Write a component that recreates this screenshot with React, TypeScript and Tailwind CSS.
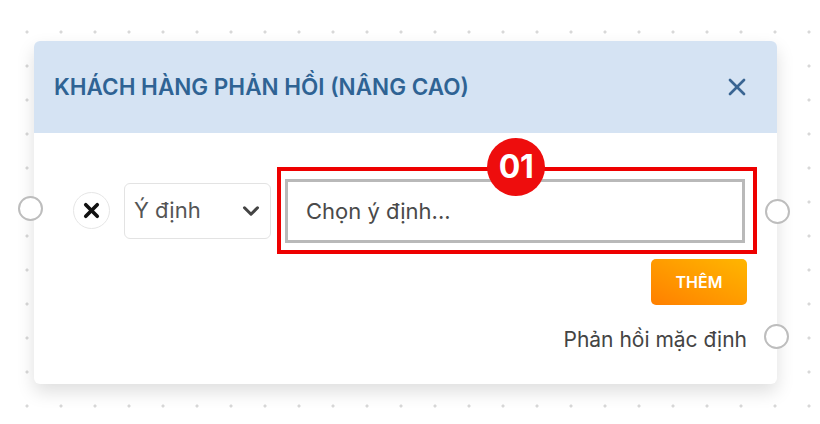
import { X, ChevronDown } from "lucide-react";

const FONT = { fontFamily: "Inter, 'Noto Sans', sans-serif" };

function Handle({ className }: { className: string }) {
  return (
    <div
      className={`absolute w-[25px] h-[25px] rounded-full border-2 border-[#bdbdbd] bg-white ${className}`}
    />
  );
}

export default function App() {
  return (
    <div
      style={FONT}
      className="relative w-[820px] h-[424px] bg-white bg-[radial-gradient(circle,#d8d8d8_1.3px,transparent_1.8px)] bg-[size:34px_34px] bg-[position:10px_15px] pt-[41px] pl-[34px]"
    >
      {/* node card */}
      <div className="relative w-[743px] h-[343px] rounded-[6px] bg-white shadow-[0_8px_18px_rgba(0,0,0,0.13)]">
        <div className="flex items-center justify-between h-[92px] rounded-t-[6px] bg-[#d5e3f3] pl-[20px] pr-[26px]">
          <span className="text-[22.5px] font-semibold text-[#2f6394] tracking-[0px]">
            KHÁCH HÀNG PHẢN HỒI (NÂNG CAO)
          </span>
          <X size={28} strokeWidth={2.3} className="text-[#3a6592]" />
        </div>

        <div className="flex flex-col">
          <div className="flex items-center pl-[39px] pt-[34px]">
            <button className="flex items-center justify-center w-[37px] h-[37px] rounded-full border border-[#e6e6e6] bg-white">
              <X size={23} strokeWidth={3.8} className="text-[#111]" />
            </button>
            <div className="ml-[14px] flex items-center justify-between w-[147px] h-[56px] rounded-[6px] border border-[#e3e3e3] pl-[9px] pr-[6px]">
              <span className="text-[22px] text-[#555]">Ý định</span>
              <ChevronDown size={26} strokeWidth={2.8} className="text-[#444]" />
            </div>
            <div className="relative ml-[6px] w-[480px] h-[87px] border-4 border-[#ee0000] pl-[4px] pt-[8px]">
              <div className="flex items-center w-[460px] h-[64px] border-[3px] border-[#b9b9b9] pl-[18px]">
                <span className="text-[22px] text-[#4a4a4a]">Chọn ý định...</span>
              </div>
              <div className="absolute left-[206px] top-[-33px] flex items-center justify-center w-[58px] h-[58px] rounded-full bg-[#ee0d0d]">
                <span className="text-[32px] font-bold text-white tracking-[-0.5px]">01</span>
              </div>
            </div>
          </div>

          <div className="flex justify-end pr-[30px] mt-[5px]">
            <button className="w-[96px] h-[46px] rounded-[5px] bg-gradient-to-tr from-[#ff7f00] to-[#ffb600] text-[16px] font-semibold text-white">
              THÊM
            </button>
          </div>

          <div className="flex justify-end pr-[30px] mt-[19px]">
            <span className="text-[21px] text-[#444]">Phản hồi mặc định</span>
          </div>
        </div>

        <Handle className="left-[-16px] top-[155px]" />
        <Handle className="right-[-13px] top-[158px]" />
        <Handle className="right-[-12px] top-[283px]" />
      </div>
    </div>
  );
}
